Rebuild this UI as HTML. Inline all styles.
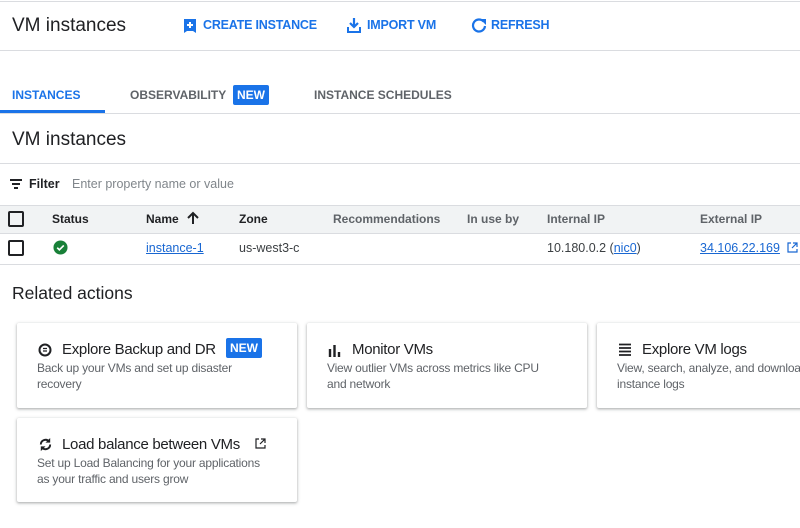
<!DOCTYPE html>
<html><head><style>
*{margin:0;padding:0;box-sizing:border-box}
body{width:800px;height:528px;overflow:hidden;background:#fff;font-family:"Liberation Sans",sans-serif;color:#202124;position:relative}
.a{position:absolute;white-space:nowrap}
.hl{position:absolute;left:0;width:800px;height:1px;background:#dadce0}
.btn{color:#1a73e8;font-size:12.5px;font-weight:bold;letter-spacing:-.2px}
.tab{font-size:12px;font-weight:bold;color:#5f6368;letter-spacing:0}
.new{background:#1a73e8;color:#fff;font-size:12px;font-weight:bold;padding:3px 4px;border-radius:2px}
.th{font-size:12px;font-weight:bold;color:#202124;top:212px}
.thg{color:#5f6368}
.td{font-size:12.5px;color:#3c4043;top:241px}
.lnk{color:#1967d2;text-decoration:underline}
.card{position:absolute;background:#fff;box-shadow:0 1px 2px rgba(60,64,67,.3),0 1px 3px 1px rgba(60,64,67,.15);border-radius:2px}
.ct{position:absolute;left:45px;top:18px;font-size:15px;white-space:nowrap;letter-spacing:-.3px}
.cd{position:absolute;left:20px;top:37px;font-size:12px;color:#5f6368;line-height:16px;letter-spacing:-.2px}
.cb{position:absolute;width:16px;height:16px;border:2px solid #202124;border-radius:2px}
</style></head><body>
<div class="hl" style="top:1px"></div>
<div class="a" style="left:12px;top:15px;font-size:19px">VM instances</div>
<svg class="a" style="left:183px;top:18px" width="14" height="16" viewBox="0 0 14 16"><path d="M1 1h12v14l-3-2H4l-3 2z" fill="#1a73e8"/><path d="M7 4v6M4 7h6" stroke="#fff" stroke-width="2"/></svg>
<div class="a btn" style="left:203px;top:18px">CREATE INSTANCE</div>
<svg class="a" style="left:347px;top:17px" width="14" height="16" viewBox="0 0 14 16"><path d="M7 1v8M3 6l4 4 4-4" stroke="#1a73e8" stroke-width="2.2" fill="none"/><path d="M1 10v5h12v-5" stroke="#1a73e8" stroke-width="2" fill="none"/></svg>
<div class="a btn" style="left:367px;top:18px">IMPORT VM</div>
<svg class="a" style="left:471px;top:17px" width="16" height="16" viewBox="0 0 16 16"><path d="M12.5 4.5A6 6 0 1 0 14 9" stroke="#1a73e8" stroke-width="2.2" fill="none"/><path d="M9 2h6v6z" fill="#1a73e8"/></svg>
<div class="a btn" style="left:491px;top:18px">REFRESH</div>
<div class="hl" style="top:50px"></div>

<div class="a tab" style="left:12px;top:88px;color:#1a73e8">INSTANCES</div>
<div class="a" style="left:0;top:110px;width:105px;height:3px;background:#1a73e8"></div>
<div class="a tab" style="left:130px;top:88px">OBSERVABILITY</div>
<div class="a new" style="left:233px;top:85px">NEW</div>
<div class="a tab" style="left:314px;top:88px">INSTANCE SCHEDULES</div>
<div class="hl" style="top:113px"></div>

<div class="a" style="left:12px;top:129px;font-size:19px">VM instances</div>
<div class="hl" style="top:163px"></div>

<svg class="a" style="left:9px;top:178px" width="14" height="12" viewBox="0 0 14 12"><path d="M1 2h12M3 6h8M5 10h4" stroke="#202124" stroke-width="2"/></svg>
<div class="a" style="left:29px;top:177px;font-size:12.5px;font-weight:bold">Filter</div>
<div class="a" style="left:72px;top:177px;font-size:12.5px;color:#80868b">Enter property name or value</div>

<div class="a" style="left:0;top:205px;width:800px;height:29px;background:#f1f3f4;border-top:1px solid #dadce0;border-bottom:1px solid #dadce0"></div>
<div class="cb" style="left:8px;top:211px"></div>
<div class="a th" style="left:52px">Status</div>
<div class="a th" style="left:146px">Name</div>
<svg class="a" style="left:186px;top:211px" width="14" height="14" viewBox="0 0 14 14"><path d="M7 13V2M2 7l5-5 5 5" stroke="#202124" stroke-width="2" fill="none"/></svg>
<div class="a th" style="left:239px">Zone</div>
<div class="a th thg" style="left:333px">Recommendations</div>
<div class="a th thg" style="left:467px">In use by</div>
<div class="a th thg" style="left:547px">Internal IP</div>
<div class="a th thg" style="left:700px">External IP</div>

<div class="cb" style="left:8px;top:240px"></div>
<svg class="a" style="left:53px;top:240px" width="15" height="15" viewBox="0 0 16 16"><circle cx="8" cy="8" r="7.5" fill="#188038"/><path d="M4.5 8.2l2.3 2.3 4.7-4.7" stroke="#fff" stroke-width="1.8" fill="none"/></svg>
<div class="a td lnk" style="left:146px">instance-1</div>
<div class="a td" style="left:239px">us-west3-c</div>
<div class="a td" style="left:547px">10.180.0.2 (<span class="lnk">nic0</span>)</div>
<div class="a td lnk" style="left:700px">34.106.22.169</div>
<svg class="a" style="left:787px;top:242px" width="11" height="11" viewBox="0 0 11 11"><path d="M4 1H1v9h9V7M6 1h4v4M10 1L5 6" stroke="#1967d2" stroke-width="1.2" fill="none"/></svg>
<div class="hl" style="top:264px"></div>

<div class="a" style="left:12px;top:283px;font-size:17.5px">Related actions</div>

<div class="card" style="left:17px;top:323px;width:280px;height:85px">
<svg class="a" style="left:21px;top:20px" width="14" height="14" viewBox="0 0 14 14"><circle cx="7" cy="7" r="5.5" stroke="#202124" stroke-width="2" fill="none"/><path d="M5 5.5h4M5 8h4" stroke="#202124" stroke-width="1.3"/></svg>
<div class="ct">Explore Backup and DR</div>
<div class="a new" style="left:209px;top:15px">NEW</div>
<div class="cd">Back up your VMs and set up disaster<br>recovery</div></div>
<div class="card" style="left:307px;top:323px;width:280px;height:85px">
<svg class="a" style="left:21px;top:21px" width="14" height="13" viewBox="0 0 14 13"><path d="M2 5v8M6.5 1v12M11 8v5" stroke="#202124" stroke-width="2.4"/></svg>
<div class="ct">Monitor VMs</div>
<div class="cd">View outlier VMs across metrics like CPU<br>and network</div></div>
<div class="card" style="left:597px;top:323px;width:220px;height:85px">
<svg class="a" style="left:21px;top:20px" width="14" height="13" viewBox="0 0 14 13"><path d="M1 1.5h12M1 5h12M1 8.5h12M1 12h12" stroke="#202124" stroke-width="1.8"/></svg>
<div class="ct">Explore VM logs</div>
<div class="cd">View, search, analyze, and download<br>instance logs</div></div>
<div class="card" style="left:17px;top:418px;width:280px;height:84px">
<svg class="a" style="left:21px;top:19px" width="15" height="15" viewBox="0 0 16 16"><path d="M3 8a5 5 0 0 1 9-3M13 8a5 5 0 0 1-9 3" stroke="#202124" stroke-width="2" fill="none"/><path d="M13 1v5H8zM3 15v-5h5z" fill="#202124"/></svg>
<div class="ct">Load balance between VMs</div>
<svg class="a" style="left:238px;top:20px" width="11" height="11" viewBox="0 0 11 11"><path d="M4 1H1v9h9V7M6 1h4v4M10 1L5 6" stroke="#202124" stroke-width="1.2" fill="none"/></svg>
<div class="cd">Set up Load Balancing for your applications<br>as your traffic and users grow</div></div>
</body></html>
